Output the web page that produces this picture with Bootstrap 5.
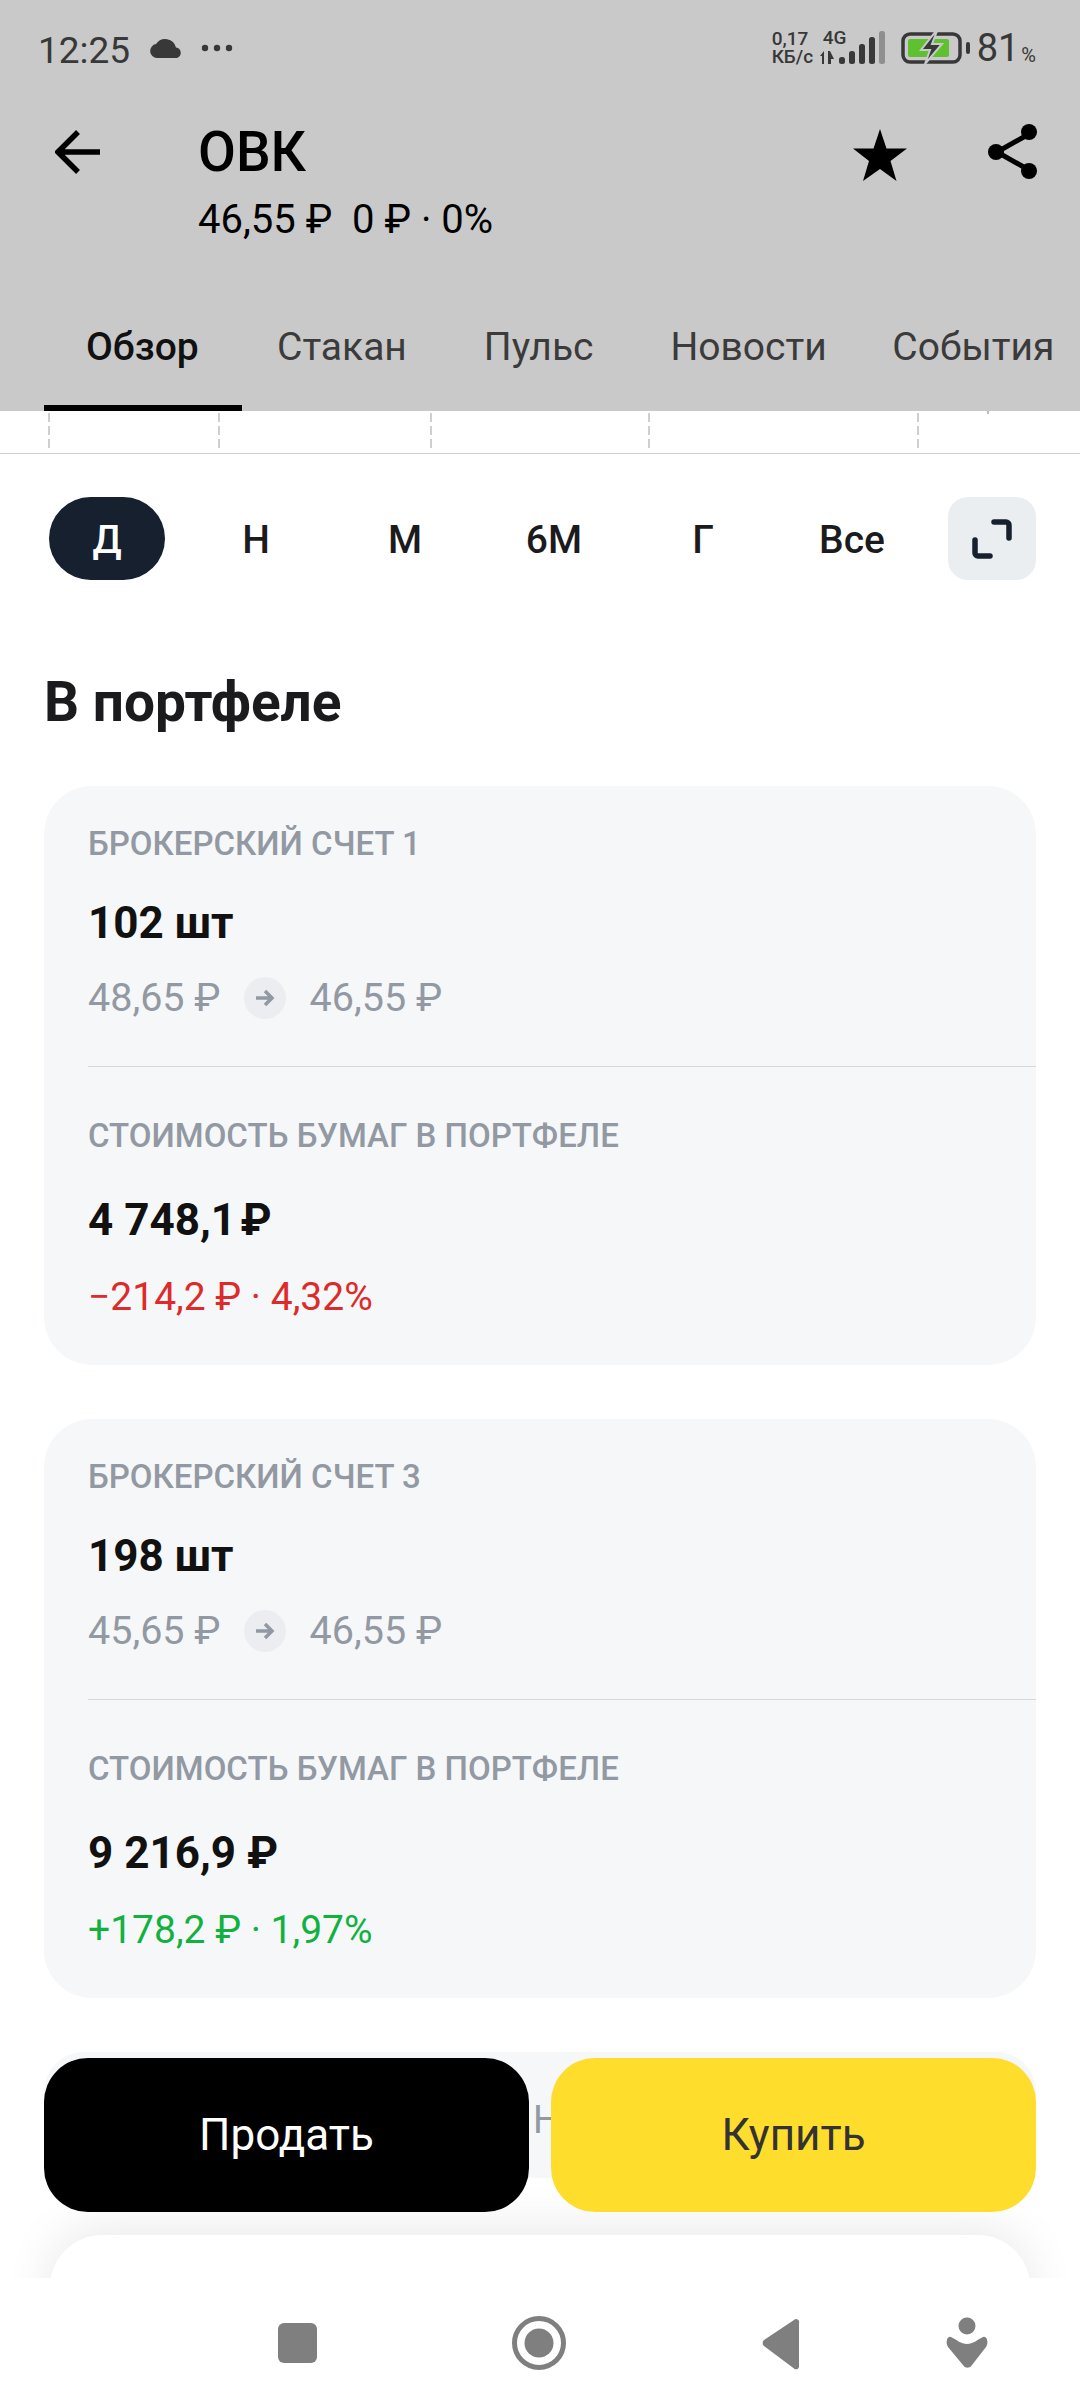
<!DOCTYPE html>
<html lang="ru">
<head>
<meta charset="utf-8">
<link href="https://cdn.jsdelivr.net/npm/bootstrap@5.3.0/dist/css/bootstrap.min.css" rel="stylesheet">
<style>
html,body{margin:0;background:#fff}
body{font-family:Roboto,"Liberation Sans",sans-serif;color:#1b1b1d}
.screen{width:1080px;height:2408px;overflow:hidden}
.app-head{background:#c9c9c9;height:411px}
.status-row{height:96px;padding:0 44px 0 38px;color:#383838}
.clock{font-size:37px;line-height:1;margin-top:4px}
.cloud-ic{margin-left:19px}
.dots-ic{margin-left:16px}
.speed{font-size:19px;line-height:18px;font-weight:500;width:44px;white-space:nowrap}
.sig-wrap{position:relative;width:70px;height:34px;margin-left:3px}
.fourg{position:absolute;left:4px;top:-2px;font-size:19px;line-height:17px;font-weight:500}
.batt-ic{margin-left:12px}
.pct{font-size:38px;line-height:1;margin-left:6px}
.pct-s{font-size:20px;margin-left:2px;align-self:flex-end;margin-bottom:2px;line-height:1}
.title-row{height:187px;padding:26px 42px 0 55px}
.title-text{margin-left:97px}
.name{font-size:55px;line-height:60px;font-weight:500;color:#000}
.quote{font-size:40px;line-height:50px;margin-top:13px;color:#000;font-weight:400;white-space:pre}
.star-ic{margin-right:81px;margin-top:5px}
.top-ics{height:60px}
.tabs-nav{padding-left:44px;flex-wrap:nowrap;overflow:hidden;height:128px;margin:0}
.tabs-nav .nav-link{flex:none;font-size:39px;line-height:128px;padding:0 38.500px;color:#3b3b3b;white-space:nowrap;height:128px;font-weight:400}
.tabs-nav .nav-link.active{color:#111;font-weight:500;width:198px;padding:0 0 0 42px;box-shadow:inset 0 -6px 0 #000}
.tabs-nav .nav-link.active + .nav-link{padding-left:35px}
.tabs-nav .nav-link.last-tab{padding-left:27px}
.chart-tail{height:43px;border-bottom:1px solid #d0d0d0;display:block}
.chart-tail svg{display:block}
.periods{padding:43px 44px 0 49px;min-height:126px}
.per-item{width:116px;height:83px;margin-right:33px;font-size:39px;font-weight:500;border-radius:42px;color:#1b1b1d;padding-top:3px}
.per-item.on{background:#16202e;color:#fff}
.expand-btn{width:88px;height:83px;background:#ebeef0;border-radius:20px;margin-left:auto}
.sect-title{font-size:55px;font-weight:700;line-height:60px;margin:92px 0 0 44px;padding:0;color:#1b1b1d}
.pf-card{margin:54px 44px 0;background:#f5f7f9;border-radius:48px;padding:30px 0 43px 44px;height:579px}
.lab{font-size:33px;line-height:56px;color:#9299a2;font-weight:500;text-transform:uppercase}
.amt{font-size:44px;line-height:60px;font-weight:700;color:#111}
.qty{margin-top:21px}
.val{margin-top:26px}
.prices{margin-top:20px;line-height:50px;font-size:39.500px;color:#9299a2}
.rnd{width:42px;height:42px;border-radius:50%;background:#ebedf0;margin:0 24px 0 23px}
.sep{height:1px;background:#d5d8dc;margin-top:43px;margin-bottom:41px}
.delta{margin-top:22px;font-size:39px;line-height:50px}
.neg{color:#dd2a2a}
.pos{color:#12b13f}
.content-zone{position:relative;flex:1 1 auto;overflow:hidden;min-height:0}
.peek{margin:54px 44px 0;height:126px;background:#f5f7f9;border-radius:40px;color:#9299a2;font-size:38px;line-height:136px;padding-left:489px}
.sheet{position:absolute;left:50px;right:50px;top:1824px;height:200px;background:#fff;border-radius:52px;box-shadow:0 -6px 50px rgba(0,0,0,.09)}
.act-bar{position:absolute;left:44px;right:44px;top:1647px;gap:22px}
.act-bar .btn{flex:1 1 0;height:154px;border-radius:44px;font-size:44px;border:0;padding:0}
.btn-sell{background:#000;color:#fff}
.btn-buy{background:#ffdd2d;color:#333}
.sys-nav{height:130px;background:#fff;position:relative;z-index:2}
.sys-nav svg{display:block}
</style>
</head>
<body>
<div class="screen d-flex flex-column">
  <header class="app-head">
    <div class="status-row d-flex align-items-center">
      <span class="clock">12:25</span>
      <svg class="cloud-ic" width="36" height="24" viewBox="0 0 36 24"><path d="M8 22a7 7 0 0 1-1-13.900 11 11 0 0 1 20 3.400A5.400 5.400 0 0 1 28 22z" fill="#383838"/></svg>
      <svg class="dots-ic" width="34" height="8" viewBox="0 0 34 8"><circle cx="4" cy="4" r="3.200" fill="#383838"/><circle cx="16" cy="4" r="3.200" fill="#383838"/><circle cx="28" cy="4" r="3.200" fill="#383838"/></svg>
      <div class="ms-auto d-flex align-items-center">
        <div class="speed">0,17<br>КБ/с</div>
        <div class="sig-wrap">
          <span class="fourg">4G</span>
          <svg width="70" height="34" viewBox="0 0 70 34">
            <path d="M1 25l4-5v13H3v-8zM9 20h2l4 8h-3v5h-3z" fill="#383838"/>
            <rect x="20" y="26" width="6" height="7" rx="2.500" fill="#383838"/>
            <rect x="30" y="20" width="6" height="13" rx="2.500" fill="#383838"/>
            <rect x="40" y="13" width="6" height="20" rx="2.500" fill="#383838"/>
            <rect x="50" y="6" width="6" height="27" rx="2.500" fill="#383838"/>
            <rect x="60" y="0" width="6" height="33" rx="2.500" fill="#8f8f8f"/>
          </svg>
        </div>
        <svg class="batt-ic" width="70" height="32" viewBox="0 0 70 32">
          <rect x="2" y="2" width="57" height="28" rx="7" fill="none" stroke="#383838" stroke-width="3.500"/>
          <rect x="7" y="7" width="41" height="18" rx="2" fill="#5fc12f"/>
          <path d="M35 -1L20 18h9l-5 14 17-20h-10l5-13z" fill="#383838" stroke="#c9c9c9" stroke-width="2"/>
          <rect x="65" y="10" width="4" height="12" rx="2" fill="#383838"/>
        </svg>
        <span class="pct">81</span><span class="pct-s">%</span>
      </div>
    </div>
    <div class="title-row d-flex align-items-start">
      <svg class="mt-2 flex-shrink-0" width="46" height="44" viewBox="0 0 46 44"><path d="M45 22H4M23 2L3 22l20 20" fill="none" stroke="#000" stroke-width="5.500"/></svg>
      <div class="title-text flex-grow-1">
        <div class="name">ОВК</div>
        <div class="quote">46,55 ₽  0 ₽ · 0%</div>
      </div>
      <div class="d-flex align-items-center top-ics">
        <svg class="star-ic" width="54" height="52" viewBox="0 0 54 52"><path d="M27 0l6.500 19.500H54L37.500 32l6 20L27 40 10 52l6-20L0 19.500h20.500z" fill="#000"/></svg>
        <svg width="50" height="56" viewBox="0 0 50 56"><path d="M41 10L9 28l32 18" fill="none" stroke="#000" stroke-width="5"/><circle cx="41" cy="8" r="8" fill="#000"/><circle cx="8" cy="28" r="8" fill="#000"/><circle cx="41" cy="47" r="8" fill="#000"/></svg>
      </div>
    </div>
    <nav class="nav tabs-nav">
      <a class="nav-link active" href="#">Обзор</a>
      <a class="nav-link" href="#">Стакан</a>
      <a class="nav-link" href="#">Пульс</a>
      <a class="nav-link" href="#">Новости</a>
      <a class="nav-link last-tab" href="#">События</a>
    </nav>
  </header>

  <div class="content-zone">
    <div class="chart-tail">
      <svg width="1080" height="41" viewBox="0 0 1080 41">
        <g stroke="#cfcfcf" stroke-width="2" stroke-dasharray="9 4">
          <path d="M49 2v39M219 2v39M431 2v39M649 2v39M918 2v39"/>
        </g>
        <path d="M988 0v3" stroke="#bbb" stroke-width="2"/>
      </svg>
    </div>
    <div class="periods d-flex align-items-start">
      <div class="per-item on d-flex align-items-center justify-content-center">Д</div>
      <div class="per-item d-flex align-items-center justify-content-center">Н</div>
      <div class="per-item d-flex align-items-center justify-content-center">М</div>
      <div class="per-item d-flex align-items-center justify-content-center">6М</div>
      <div class="per-item d-flex align-items-center justify-content-center">Г</div>
      <div class="per-item d-flex align-items-center justify-content-center">Все</div>
      <div class="expand-btn d-flex align-items-center justify-content-center">
        <svg width="40" height="40" viewBox="0 0 40 40"><path d="M22 3h12a3 3 0 0 1 3 3v13M3 21v13a3 3 0 0 0 3 3h12" fill="none" stroke="#16202e" stroke-width="5.500" stroke-linecap="round"/></svg>
      </div>
    </div>
    <h2 class="sect-title">В портфеле</h2>

    <section class="pf-card">
      <div class="lab">Брокерский счет 1</div>
      <div class="amt qty">102 шт</div>
      <div class="prices d-flex align-items-center">
        <span>48,65 ₽</span>
        <span class="rnd d-flex align-items-center justify-content-center"><svg width="22" height="18" viewBox="0 0 22 18"><path d="M2 9h16M11 2l7 7-7 7" fill="none" stroke="#9299a2" stroke-width="3.500"/></svg></span>
        <span>46,55 ₽</span>
      </div>
      <div class="sep"></div>
      <div class="lab">Стоимость бумаг в портфеле</div>
      <div class="amt val">4 748,1&#8202;₽</div>
      <div class="delta neg">−214,2 ₽ · 4,32%</div>
    </section>

    <section class="pf-card">
      <div class="lab">Брокерский счет 3</div>
      <div class="amt qty">198 шт</div>
      <div class="prices d-flex align-items-center">
        <span>45,65 ₽</span>
        <span class="rnd d-flex align-items-center justify-content-center"><svg width="22" height="18" viewBox="0 0 22 18"><path d="M2 9h16M11 2l7 7-7 7" fill="none" stroke="#9299a2" stroke-width="3.500"/></svg></span>
        <span>46,55 ₽</span>
      </div>
      <div class="sep"></div>
      <div class="lab">Стоимость бумаг в портфеле</div>
      <div class="amt val">9 216,9 ₽</div>
      <div class="delta pos">+178,2 ₽ · 1,97%</div>
    </section>

    <div class="peek">Н</div>
    <div class="sheet"></div>
    <div class="act-bar d-flex">
      <button class="btn btn-sell" type="button">Продать</button>
      <button class="btn btn-buy" type="button">Купить</button>
    </div>
  </div>

  <footer class="sys-nav">
    <svg width="1080" height="130" viewBox="0 0 1080 130">
      <rect x="278" y="45" width="39" height="40" rx="6" fill="#7f7f7f"/>
      <circle cx="539" cy="65" r="24.500" fill="none" stroke="#7f7f7f" stroke-width="5"/>
      <circle cx="539" cy="65" r="14.500" fill="#7f7f7f"/>
      <path d="M799 45v44a3 3 0 0 1-5 1.500L764 68a4 4 0 0 1 0-6l30-20a3 3 0 0 1 5 3z" fill="#7f7f7f"/>
      <circle cx="967" cy="48" r="8.500" fill="#7f7f7f"/>
      <path d="M947 62a3 3 0 0 1 4-3c6 3 10 7 16 7s10-4 16-7a3 3 0 0 1 4 3c1 3 0 5-1 7L972 87a5 5 0 0 1-9 0L948 69c-1-2-2-4-1-7z" fill="#7f7f7f"/>
    </svg>
  </footer>
</div>
<script src="https://cdn.jsdelivr.net/npm/bootstrap@5.3.0/dist/js/bootstrap.bundle.min.js"></script>
</body>
</html>
